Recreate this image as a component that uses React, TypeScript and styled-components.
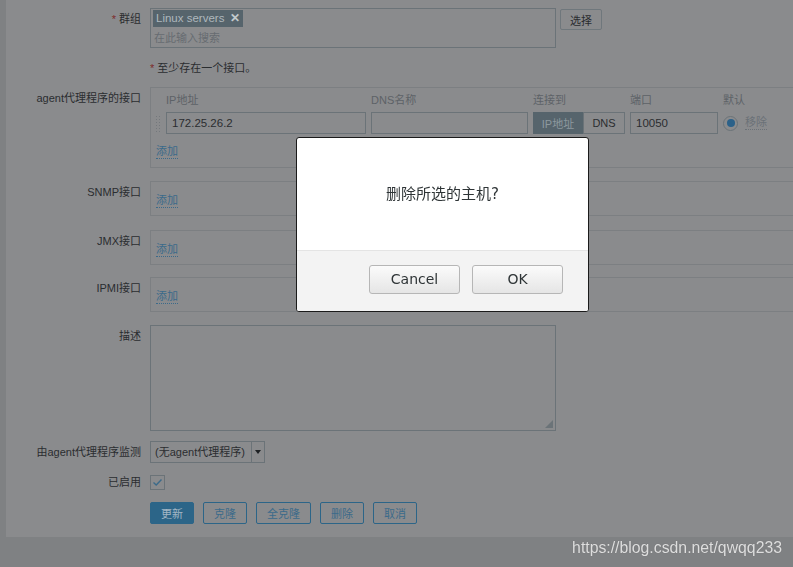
import React from 'react';
import styled, { createGlobalStyle } from 'styled-components';

const GlobalStyle = createGlobalStyle`
  html, body {
    margin: 0;
    padding: 0;
    background: #7f8183;
    overflow: hidden;
    font-family: "Liberation Sans", "Noto Sans CJK SC", sans-serif;
    font-size: 11px;
    color: #2a2d30;
  }
  * { box-sizing: border-box; }
`;

const Page = styled.div`
  width: 793px;
  height: 567px;
  padding-left: 6px;
  overflow: hidden;
`;

const Panel = styled.div`
  width: 900px;
  background: #8a8b8d;
  padding: 8px 0 13px 0;
`;

const Row = styled.div<{ $mb?: number }>`
  display: grid;
  grid-template-columns: 135px 1fr;
  column-gap: 9px;
  margin-bottom: ${({ $mb }) => ($mb ?? 12)}px;
`;

const Label = styled.div<{ $pt?: number }>`
  text-align: right;
  line-height: 14px;
  padding-top: ${({ $pt }) => ($pt ?? 4)}px;
  white-space: nowrap;
`;

const Req = styled.span`
  color: #7d2b2b;
  margin-right: 3px;
`;

const Field = styled.div`
  display: flex;
  align-items: flex-start;
  gap: 4px;
`;

const MultiSelect = styled.div`
  width: 406px;
  height: 40px;
  border: 1px solid #6b7378;
  padding: 1px 2px;
`;

const Tag = styled.span`
  display: inline-flex;
  align-items: center;
  height: 17px;
  background: #56646c;
  color: #aeb8bd;
  padding: 0 3px;
  gap: 6px;
  line-height: 17px;
  font-size: 11.5px;
`;

const TagClose = styled.span`
  color: #c2c9cd;
  font-size: 12px;
  font-weight: bold;
`;

const Placeholder = styled.div`
  color: #676c71;
  padding: 4px 0 0 1px;
  line-height: 14px;
`;

const PlainButton = styled.button`
  height: 21px;
  padding: 0 9px;
  margin-top: 1px;
  border: 1px solid #6f777c;
  border-radius: 2px;
  background: transparent;
  color: #2a2d30;
  font: inherit;
`;

const Hint = styled.div`
  grid-column: 2;
  line-height: 14px;
  padding-top: 3px;
`;

const InterfaceBox = styled.div<{ $pad?: string }>`
  width: 660px;
  border: 1px solid #7c7f82;
  padding: ${({ $pad }) => $pad ?? '11px 5px 8px 5px'};
`;

const IfaceGrid = styled.div`
  display: grid;
  grid-template-columns: 5px 200px 157px 92px 88px 70px;
  column-gap: 5px;
  row-gap: 5px;
  align-items: center;
`;

const ColHead = styled.div`
  color: #5d6267;
  line-height: 14px;
`;

const Handle = styled.div`
  width: 6px;
  height: 17px;
  margin-left: -1px;
  background-image: radial-gradient(circle, #74787c 0.8px, transparent 1px);
  background-size: 3px 3px;
`;

const Input = styled.div`
  height: 22px;
  width: 100%;
  border: 1px solid #6b7378;
  padding: 0 5px;
  line-height: 20px;
  font-size: 11.5px;
`;

const Segmented = styled.div`
  display: flex;
  height: 22px;
`;

const Segment = styled.div<{ $on?: boolean }>`
  flex: ${({ $on }) => ($on ? '0 0 50px' : '1')};
  display: flex;
  align-items: center;
  justify-content: center;
  background: ${({ $on }) => ($on ? '#56646c' : 'transparent')};
  color: ${({ $on }) => ($on ? '#8d999f' : '#2a2d30')};
  border: 1px solid ${({ $on }) => ($on ? '#56646c' : '#6b7378')};
`;

const DefaultCell = styled.div`
  display: flex;
  align-items: center;
  gap: 7px;
`;

const Radio = styled.span`
  width: 15px;
  height: 15px;
  border-radius: 50%;
  border: 1px solid #6b7378;
  display: flex;
  align-items: center;
  justify-content: center;
  &::after {
    content: '';
    width: 8px;
    height: 8px;
    border-radius: 50%;
    background: #2b6189;
  }
`;

const Link = styled.span<{ $muted?: boolean }>`
  color: ${({ $muted }) => ($muted ? '#6b7177' : '#3b6a8a')};
  line-height: 13px;
  border-bottom: 1px dotted ${({ $muted }) => ($muted ? '#6b7177' : '#3b6a8a')};
  display: inline-block;
  height: 14px;
`;

const AddRow = styled.div<{ $mt?: number }>`
  margin-top: ${({ $mt }) => ($mt ?? 0)}px;
  line-height: 14px;
  height: 14px;
`;

const TextArea = styled.div`
  width: 406px;
  height: 106px;
  border: 1px solid #6b7378;
  display: flex;
  align-items: flex-end;
  justify-content: flex-end;
  padding: 2px;
`;

const Grip = styled.div`
  width: 8px;
  height: 8px;
  background-image: radial-gradient(circle, #6b7378 0.8px, transparent 1px);
  background-size: 2px 2px;
  clip-path: polygon(100% 0, 100% 100%, 0 100%);
`;

const Select = styled.div`
  display: flex;
  width: 115px;
  height: 22px;
  border: 1px solid #6b7378;
`;

const SelectText = styled.div`
  flex: 1;
  padding-left: 4px;
  line-height: 20px;
  white-space: nowrap;
  overflow: hidden;
`;

const SelectArrow = styled.div`
  width: 13px;
  border-left: 1px solid #6b7378;
  display: flex;
  align-items: center;
  justify-content: center;
  &::after {
    content: '';
    border-left: 3px solid transparent;
    border-right: 3px solid transparent;
    border-top: 4px solid #1e2124;
  }
`;

const Checkbox = styled.div`
  width: 15px;
  height: 15px;
  border: 1px solid #6b7378;
  display: flex;
  align-items: center;
  justify-content: center;
`;

const Actions = styled.div`
  display: flex;
  gap: 9px;
`;

const ActionButton = styled.button<{ $primary?: boolean }>`
  height: 22px;
  padding: 0 10px;
  border: 1px solid #2c6588;
  border-radius: 2px;
  background: ${({ $primary }) => ($primary ? '#2c6588' : 'transparent')};
  color: ${({ $primary }) => ($primary ? '#a3b6c4' : '#3b6a8a')};
  font: inherit;
  font-size: 11px;
`;

const Dialog = styled.div`
  position: fixed;
  left: 296px;
  top: 137px;
  width: 293px;
  border: 1px solid #1b1b1b;
  border-radius: 3px;
  background: #fff;
  overflow: hidden;
  font-family: "DejaVu Sans", "Noto Sans CJK SC", sans-serif;
  color: #2e3436;
`;

const DialogBody = styled.div`
  height: 112px;
  display: flex;
  align-items: center;
  justify-content: center;
  font-size: 15px;
  padding-bottom: 3px;
`;

const DialogFooter = styled.div`
  height: 61px;
  background: #f3f3f3;
  border-top: 1px solid #e4e4e4;
  display: flex;
  align-items: center;
  justify-content: flex-end;
  gap: 12px;
  padding: 0 25px 4px 0;
`;

const DialogButton = styled.button`
  width: 91px;
  height: 29px;
  border: 1px solid #b6b6b6;
  border-radius: 3px;
  background: linear-gradient(#fbfbfb, #e5e5e5);
  color: #2e3436;
  font-family: "DejaVu Sans", sans-serif;
  font-size: 14px;
`;

const Watermark = styled.div`
  position: fixed;
  right: 11px;
  bottom: 10px;
  font-family: "Liberation Sans", sans-serif;
  font-size: 15.8px;
  color: #dedede;
  text-shadow: 0 0 1px rgba(0, 0, 0, 0.2);
`;

const AddLink = () => <Link>添加</Link>;

export default function App() {
  return (
    <>
      <GlobalStyle />
      <Page>
        <Panel>
          <Row $mb={10}>
            <Label>
              <Req>*</Req>群组
            </Label>
            <Field>
              <MultiSelect>
                <Tag>
                  Linux servers<TagClose>✕</TagClose>
                </Tag>
                <Placeholder>在此输入搜索</Placeholder>
              </MultiSelect>
              <PlainButton>选择</PlainButton>
            </Field>
          </Row>

          <Row $mb={12}>
            <Hint>
              <Req>*</Req>至少存在一个接口。
            </Hint>
          </Row>

          <Row $mb={13}>
            <Label $pt={4}>agent代理程序的接口</Label>
            <InterfaceBox $pad="5px 5px 9px 5px">
              <IfaceGrid>
                <span />
                <ColHead>IP地址</ColHead>
                <ColHead>DNS名称</ColHead>
                <ColHead>连接到</ColHead>
                <ColHead>端口</ColHead>
                <ColHead>默认</ColHead>
                <Handle />
                <Input>172.25.26.2</Input>
                <Input />
                <Segmented>
                  <Segment $on>IP地址</Segment>
                  <Segment>DNS</Segment>
                </Segmented>
                <Input>10050</Input>
                <DefaultCell>
                  <Radio />
                  <Link $muted>移除</Link>
                </DefaultCell>
              </IfaceGrid>
              <AddRow $mt={10}>
                <AddLink />
              </AddRow>
            </InterfaceBox>
          </Row>

          <Row $mb={14}>
            <Label>SNMP接口</Label>
            <InterfaceBox>
              <AddRow>
                <AddLink />
              </AddRow>
            </InterfaceBox>
          </Row>

          <Row $mb={12}>
            <Label>JMX接口</Label>
            <InterfaceBox>
              <AddRow>
                <AddLink />
              </AddRow>
            </InterfaceBox>
          </Row>

          <Row $mb={13}>
            <Label>IPMI接口</Label>
            <InterfaceBox>
              <AddRow>
                <AddLink />
              </AddRow>
            </InterfaceBox>
          </Row>

          <Row $mb={10}>
            <Label>描述</Label>
            <TextArea>
              <Grip />
            </TextArea>
          </Row>

          <Row $mb={12}>
            <Label>由agent代理程序监测</Label>
            <Select>
              <SelectText>(无agent代理程序)</SelectText>
              <SelectArrow />
            </Select>
          </Row>

          <Row $mb={12}>
            <Label $pt={0}>已启用</Label>
            <Checkbox>
              <svg width="11" height="9" viewBox="0 0 11 9">
                <polyline points="1.5,4.5 4.2,7 9.5,1.5" fill="none" stroke="#3b6a8a" strokeWidth="1.4" />
              </svg>
            </Checkbox>
          </Row>

          <Row $mb={0}>
            <span />
            <Actions>
              <ActionButton $primary>更新</ActionButton>
              <ActionButton>克隆</ActionButton>
              <ActionButton>全克隆</ActionButton>
              <ActionButton>删除</ActionButton>
              <ActionButton>取消</ActionButton>
            </Actions>
          </Row>
        </Panel>
      </Page>

      <Dialog>
        <DialogBody>删除所选的主机?</DialogBody>
        <DialogFooter>
          <DialogButton>Cancel</DialogButton>
          <DialogButton>OK</DialogButton>
        </DialogFooter>
      </Dialog>

      <Watermark>https://blog.csdn.net/qwqq233</Watermark>
    </>
  );
}
